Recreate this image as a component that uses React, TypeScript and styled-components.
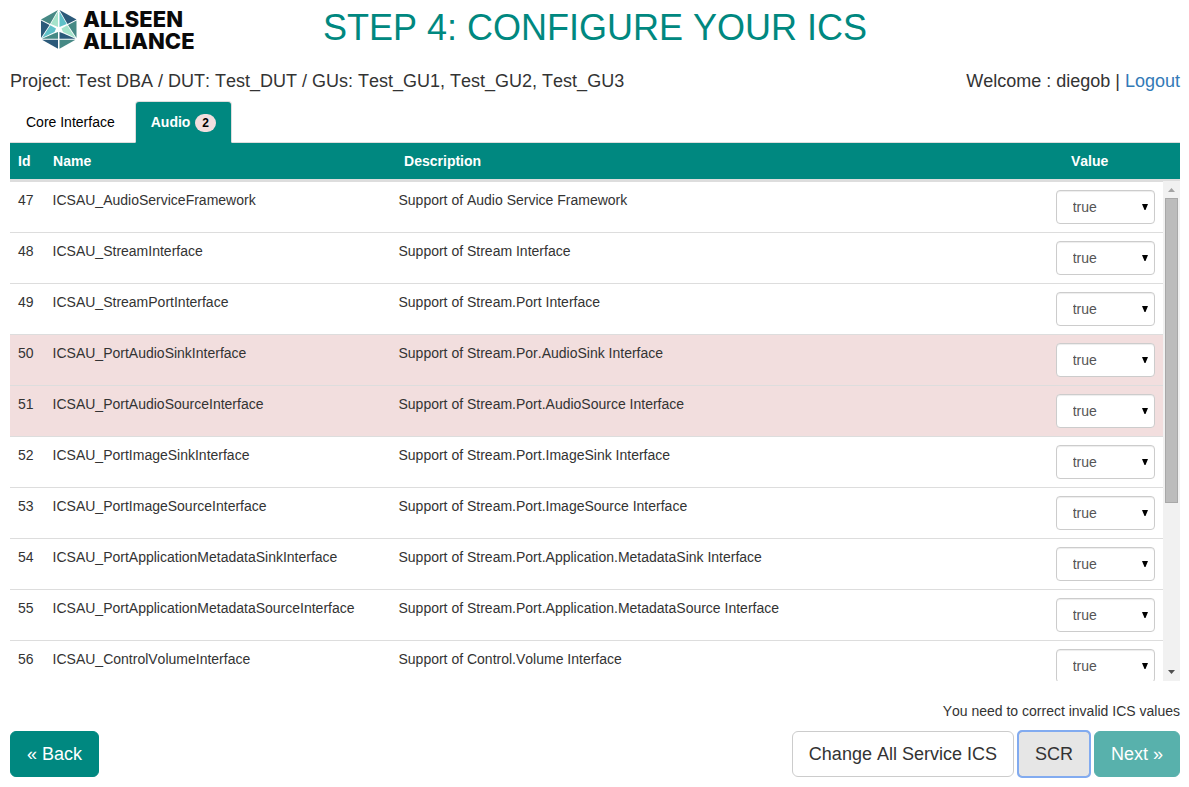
import React from "react";
import styled, { createGlobalStyle } from "styled-components";

const teal = "#008880";
const line = "#dddddd";

const GlobalStyle = createGlobalStyle`
  *, *::before, *::after { box-sizing: border-box; }
  body {
    margin: 0;
    background: #ffffff;
    color: #333333;
    font-family: "Liberation Sans", Arial, sans-serif;
    font-size: 14px;
    font-kerning: none;
    line-height: 20px;
  }
`;

const Page = styled.main`
  padding: 0 9px 10px 10px;
`;

const Header = styled.header`
  display: grid;
  grid-template-columns: 1fr auto 1fr;
  height: 60px;
`;

const Logo = styled.svg`
  display: block;
  width: 190px;
  height: 60px;
  margin-left: 15px;
`;

const LogoText = styled.text`
  font-family: Inter, "Liberation Sans", sans-serif;
  font-size: 22px;
  font-weight: 800;
  fill: #0a0a0a;
`;

const Title = styled.h1`
  margin: 8px 0 0;
  color: ${teal};
  font-size: 36px;
  font-weight: 400;
  line-height: 40px;
  white-space: nowrap;
`;

const InfoBar = styled.div`
  display: flex;
  justify-content: space-between;
  padding: 11px 0 10px;
  font-size: 18px;
  line-height: 20px;
`;

const Info = styled.span``;

const Link = styled.a`
  color: #337ab7;
  text-decoration: none;
`;

const Tabs = styled.nav`
  display: flex;
  gap: 4px;
  height: 42px;
  border-bottom: 1px solid ${line};
`;

const Tab = styled.a<{ $active?: boolean }>`
  height: 42px;
  padding: 10px 15px;
  border: 1px solid ${(p) => (p.$active ? line : "transparent")};
  border-bottom-color: transparent;
  border-radius: 4px 4px 0 0;
  background: ${(p) => (p.$active ? teal : "transparent")};
  background-clip: border-box;
  color: ${(p) => (p.$active ? "#ffffff" : "#000000")};
  font-weight: ${(p) => (p.$active ? 700 : 400)};
  text-decoration: none;
`;

const Badge = styled.span`
  display: inline-block;
  margin-left: 1px;
  padding: 3px 7px;
  border-radius: 10px;
  background: #f2dede;
  color: #000000;
  font-size: 12px;
  font-weight: 700;
  line-height: 12px;
`;

const Table = styled.table`
  width: 100%;
  table-layout: fixed;
  border-collapse: separate;
  border-spacing: 0;
`;

const HeadCell = styled.th<{ $width: string }>`
  width: ${(p) => p.$width};
  padding: 8px;
  border-bottom: 2px solid ${line};
  background: ${teal};
  color: #ffffff;
  font-weight: 700;
  text-align: left;
`;

const ScrollPane = styled.div`
  display: flex;
  height: 500px;
`;

const ScrollBody = styled.div`
  flex: 1;
  min-width: 0;
  overflow-y: auto;
  scrollbar-width: none;
`;

const Row = styled.tr<{ $invalid?: boolean }>`
  background: ${(p) => (p.$invalid ? "#f2dede" : "#ffffff")};
`;

const Cell = styled.td<{ $width: string }>`
  width: ${(p) => p.$width};
  padding: 8px;
  border-top: 1px solid ${line};
  vertical-align: top;
`;

const SelectBox = styled.div`
  position: relative;
`;

const Select = styled.select`
  display: block;
  width: 100%;
  height: 34px;
  padding: 6px 16px;
  appearance: none;
  border: 1px solid #cccccc;
  border-radius: 4px;
  background: #ffffff;
  box-shadow: inset 0 1px 1px rgba(0, 0, 0, 0.075);
  color: #555555;
  font: inherit;
`;

const SelectArrow = styled.svg`
  position: absolute;
  top: 14px;
  right: 7px;
  width: 6px;
  height: 6px;
  pointer-events: none;
`;

const Scrollbar = styled.div`
  display: flex;
  flex-direction: column;
  width: 17px;
  background: #f1f1f1;
`;

const ScrollArrow = styled.svg`
  display: block;
  width: 17px;
  height: 17px;
`;

const ScrollTrack = styled.div`
  flex: 1;
  padding: 0 2px;
`;

const ScrollThumb = styled.div`
  height: 65.5%;
  border: 1px solid #a8a8a8;
  background: #bcbcbc;
`;

const Message = styled.p`
  margin: 20px 0 10px;
  text-align: right;
`;

const Footer = styled.footer`
  display: flex;
  justify-content: space-between;
`;

const ButtonGroup = styled.div`
  display: flex;
  gap: 4px;
`;

const Button = styled.button<{ $primary?: boolean; $focused?: boolean }>`
  height: 46px;
  padding: 10px 16px;
  border: 1px solid
    ${(p) => (p.$primary ? teal : p.$focused ? "#8c9cc0" : "#cccccc")};
  border-radius: ${(p) => (p.$focused ? "4px" : "6px")};
  outline: ${(p) => (p.$focused ? "2px solid #82abf0" : "none")};
  outline-offset: -1px;
  background: ${(p) => (p.$primary ? teal : p.$focused ? "#e6e6e6" : "#ffffff")};
  color: ${(p) => (p.$primary ? "#ffffff" : "#333333")};
  font-family: inherit;
  font-size: 18px;
  font-kerning: none;
  line-height: 24px;
  white-space: nowrap;

  &:disabled {
    opacity: 0.65;
  }
`;

const columns = [
  { label: "Id", width: "3%" },
  { label: "Name", width: "30%" },
  { label: "Description", width: "57%" },
  { label: "Value", width: "10%" },
];

const rows = [
  { id: 47, name: "ICSAU_AudioServiceFramework", text: "Support of Audio Service Framework" },
  { id: 48, name: "ICSAU_StreamInterface", text: "Support of Stream Interface" },
  { id: 49, name: "ICSAU_StreamPortInterface", text: "Support of Stream.Port Interface" },
  { id: 50, name: "ICSAU_PortAudioSinkInterface", text: "Support of Stream.Por.AudioSink Interface", invalid: true },
  { id: 51, name: "ICSAU_PortAudioSourceInterface", text: "Support of Stream.Port.AudioSource Interface", invalid: true },
  { id: 52, name: "ICSAU_PortImageSinkInterface", text: "Support of Stream.Port.ImageSink Interface" },
  { id: 53, name: "ICSAU_PortImageSourceInterface", text: "Support of Stream.Port.ImageSource Interface" },
  { id: 54, name: "ICSAU_PortApplicationMetadataSinkInterface", text: "Support of Stream.Port.Application.MetadataSink Interface" },
  { id: 55, name: "ICSAU_PortApplicationMetadataSourceInterface", text: "Support of Stream.Port.Application.MetadataSource Interface" },
  { id: 56, name: "ICSAU_ControlVolumeInterface", text: "Support of Control.Volume Interface" },
];

function AllSeenLogo() {
  return (
    <Logo viewBox="0 0 190 60" role="img" aria-label="AllSeen Alliance">
      <polygon points="33,10 16,19.500 25,24" fill="#468985" />
      <polygon points="16,20.500 24.500,25 16,38" fill="#2b5a7a" />
      <polygon points="33,11.500 33,27 25.800,24" fill="#a5e3cb" />
      <polygon points="25.300,25.300 31,28.500 29.500,32 17,38" fill="#5fc0c8" />
      <polygon points="34.500,10 51.500,19.500 42.500,24" fill="#2b5a7a" />
      <polygon points="51.500,20.500 43,25 51.500,38" fill="#468985" />
      <polygon points="34.500,11.500 34.500,27 41.700,24" fill="#5fc0c8" />
      <polygon points="42.200,25.300 36.500,28.500 38,32 50.500,38" fill="#a5e3cb" />
      <polygon points="17,38.800 29,33.500 33,32 33,38.800" fill="#468985" />
      <polygon points="50.500,38.800 38.500,33.500 34.500,32 34.500,38.800" fill="#2b5a7a" />
      <polygon points="17,39.800 33,39.800 33,48.800" fill="#2b5a7a" />
      <polygon points="50.500,39.800 34.500,39.800 34.500,48.800" fill="#468985" />
      <LogoText x="58" y="27">ALLSEEN</LogoText>
      <LogoText x="58" y="49">ALLIANCE</LogoText>
    </Logo>
  );
}

export default function App() {
  return (
    <>
      <GlobalStyle />
      <Page>
        <Header>
          <AllSeenLogo />
          <Title>STEP 4: CONFIGURE YOUR ICS</Title>
        </Header>
        <InfoBar>
          <Info>Project: Test DBA / DUT: Test_DUT / GUs: Test_GU1, Test_GU2, Test_GU3</Info>
          <Info>
            Welcome : diegob | <Link href="#logout">Logout</Link>
          </Info>
        </InfoBar>
        <Tabs>
          <Tab href="#core">Core Interface</Tab>
          <Tab href="#audio" $active>
            Audio <Badge>2</Badge>
          </Tab>
        </Tabs>
        <Table>
          <thead>
            <tr>
              {columns.map((c) => (
                <HeadCell key={c.label} $width={c.width} scope="col">
                  {c.label}
                </HeadCell>
              ))}
            </tr>
          </thead>
        </Table>
        <ScrollPane>
          <ScrollBody>
            <Table>
              <tbody>
                {rows.map((r) => (
                  <Row key={r.id} $invalid={r.invalid}>
                    <Cell $width="3%">{r.id}</Cell>
                    <Cell $width="30%">{r.name}</Cell>
                    <Cell $width="57%">{r.text}</Cell>
                    <Cell $width="10%">
                      <SelectBox>
                        <Select aria-label={r.name} defaultValue="true">
                          <option value="true">true</option>
                        </Select>
                        <SelectArrow viewBox="0 0 6 6" aria-hidden="true">
                          <path d="M0 0h6L3.500 6h-1z" fill="#000000" />
                        </SelectArrow>
                      </SelectBox>
                    </Cell>
                  </Row>
                ))}
              </tbody>
            </Table>
          </ScrollBody>
          <Scrollbar aria-hidden="true">
            <ScrollArrow viewBox="0 0 17 17">
              <path d="M5 11h7L8.500 7z" fill="#a3a3a3" />
            </ScrollArrow>
            <ScrollTrack>
              <ScrollThumb />
            </ScrollTrack>
            <ScrollArrow viewBox="0 0 17 17">
              <path d="M5 6h7L8.500 10z" fill="#505050" />
            </ScrollArrow>
          </Scrollbar>
        </ScrollPane>
        <Message>You need to correct invalid ICS values</Message>
        <Footer>
          <Button type="button" $primary>« Back</Button>
          <ButtonGroup>
            <Button type="button">Change All Service ICS</Button>
            <Button type="button" $focused>SCR</Button>
            <Button type="button" $primary disabled>Next »</Button>
          </ButtonGroup>
        </Footer>
      </Page>
    </>
  );
}
